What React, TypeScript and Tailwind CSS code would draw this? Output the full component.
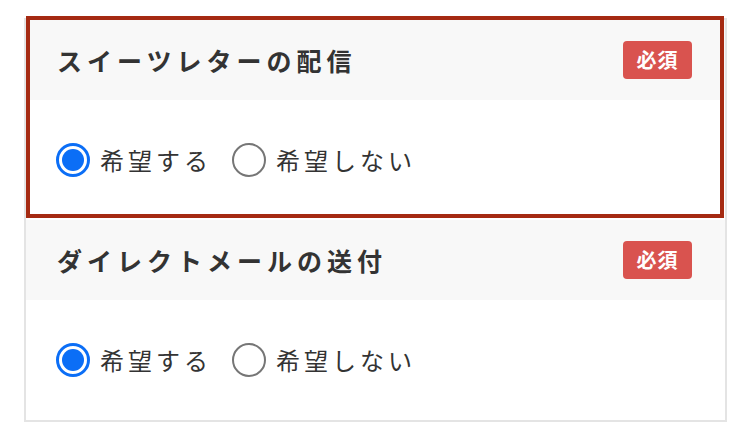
import { useState } from 'react';

const font = { fontFamily: '"Noto Sans CJK JP", "Noto Sans", sans-serif' };

function Radio({ checked, label, onClick }: { checked: boolean; label: string; onClick: () => void }) {
  return (
    <button type="button" onClick={onClick} className="flex items-center gap-[10px]">
      {checked ? (
        <span className="flex h-[34px] w-[34px] items-center justify-center rounded-full border-[3px] border-[#0b6ef6] bg-white">
          <span className="h-[22px] w-[22px] rounded-full bg-[#0b6ef6]" />
        </span>
      ) : (
        <span className="h-[34px] w-[34px] rounded-full border-2 border-[#767676] bg-white" />
      )}
      <span className="text-[24px] leading-none tracking-[4px] text-[#333]">{label}</span>
    </button>
  );
}

function Section({ title }: { title: string }) {
  const [value, setValue] = useState('yes');
  return (
    <div>
      <div className="flex h-[80px] items-center justify-between bg-[#f8f8f8] pl-[31px] pr-[33px]">
        <h2 className="text-[25px] font-bold leading-none tracking-[5px] text-[#333]">{title}</h2>
        <span className="flex h-[38px] w-[69px] items-center justify-center rounded-[4px] bg-[#d9534f] text-[20px] font-bold tracking-[1px] text-white">
          必須
        </span>
      </div>
      <div className="flex h-[120px] items-center gap-[20px] bg-white pl-[30px]">
        <Radio checked={value === 'yes'} label="希望する" onClick={() => setValue('yes')} />
        <Radio checked={value === 'no'} label="希望しない" onClick={() => setValue('no')} />
      </div>
    </div>
  );
}

export default function App() {
  return (
    <div className="min-h-[448px] w-[750px] bg-white pl-[24px] pt-[18px]" style={font}>
      <div className="relative w-[703px] border-2 border-[#e4e4e4]">
        <Section title="スイーツレターの配信" />
        <Section title="ダイレクトメールの送付" />
        <div className="pointer-events-none absolute left-[0px] top-[-4px] h-[202px] w-[698px] border-4 border-[#a52a12]" />
      </div>
    </div>
  );
}
